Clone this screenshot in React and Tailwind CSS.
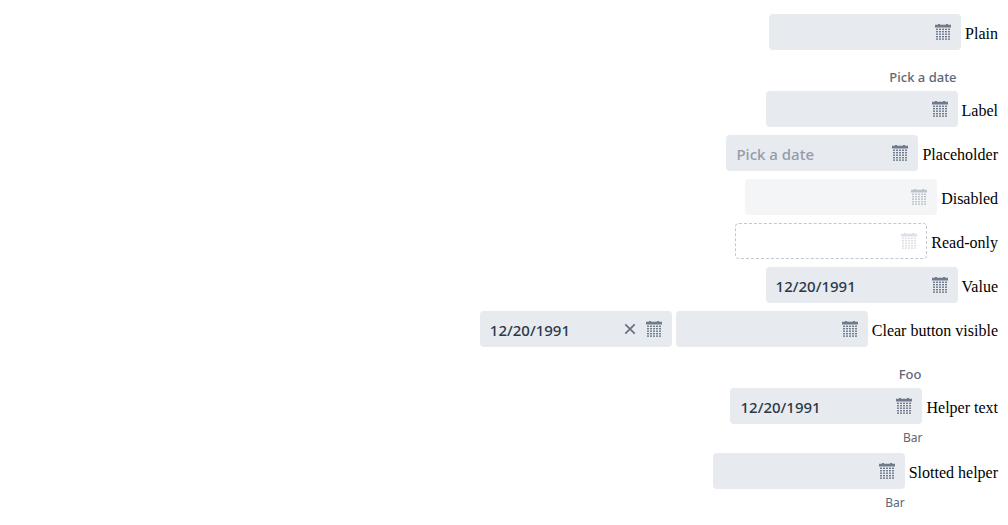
const tones = {
  normal: { box: "bg-[#e7eaee]", icon: "text-[#6f7b8b]" },
  disabled: { box: "bg-[#f3f5f7]", icon: "text-[#bdc3cc]" },
  readonly: { box: "outline-1 -outline-offset-1 outline-dashed outline-[#c3c8d0]", icon: "text-[#dde1e7]" },
};

function CalendarIcon() {
  return (
    <svg viewBox="0 0 16 18" className="h-[18px] w-4" fill="currentColor" aria-hidden="true">
      <path d="M0 1.8h3V1h2v.8h6V1h2v.8h3v2.7H0z" />
      {[5.6, 8, 10.5, 13, 15.4].map((y) =>
        [1, 4, 7, 10, 13].map((x) => (
          <rect key={`${x}-${y}`} x={x} y={y} width="2" height="1.4" />
        ))
      )}
    </svg>
  );
}

function ClearIcon() {
  return (
    <svg viewBox="0 0 12 12" className="size-3" fill="none" stroke="currentColor" strokeWidth="1.7" aria-hidden="true">
      <path d="M1.3 1.3l9.4 9.4M10.7 1.3l-9.4 9.4" />
    </svg>
  );
}

function DatePicker({ id, name, label, helper, value = "", placeholder, clear, state = "normal" }) {
  const tone = tones[state];
  const disabled = state === "disabled";
  return (
    <>
      {label && (
        <label htmlFor={id} className="row-start-1 h-[33px] pt-2 pr-px text-right text-[13px] leading-[22px] font-medium text-[#5d6776]">
          {label}
        </label>
      )}
      <div className={`row-start-2 flex h-9 w-48 items-center rounded-sm px-2.5 ${tone.box}`}>
        <input
          id={id}
          aria-label={label ? undefined : name}
          type="text"
          defaultValue={value}
          placeholder={placeholder}
          disabled={disabled}
          readOnly={state === "readonly"}
          className="h-full min-w-0 flex-1 bg-transparent pt-px text-[15px] font-medium text-[#2b3848] outline-none placeholder:text-[#939ba8]"
        />
        {clear && (
          <button type="button" aria-label="Clear" className="mr-2.5 text-[#667180]">
            <ClearIcon />
          </button>
        )}
        <button type="button" aria-label="Open calendar" disabled={disabled} className={tone.icon}>
          <CalendarIcon />
        </button>
      </div>
      {helper && (
        <div className="row-start-3 h-[21px] pt-1 text-right text-xs leading-5 text-[#5d6776]">{helper}</div>
      )}
    </>
  );
}

const rows = [
  { title: "Plain", fields: [{}] },
  { title: "Label", fields: [{ label: "Pick a date" }] },
  { title: "Placeholder", fields: [{ placeholder: "Pick a date" }] },
  { title: "Disabled", fields: [{ state: "disabled" }] },
  { title: "Read-only", fields: [{ state: "readonly" }] },
  { title: "Value", fields: [{ value: "12/20/1991" }] },
  { title: "Clear button visible", fields: [{ value: "12/20/1991", clear: true }, {}] },
  { title: "Helper text", fields: [{ label: "Foo", value: "12/20/1991", helper: "Bar" }] },
  { title: "Slotted helper", fields: [{ helper: "Bar" }] },
];

export default function App() {
  return (
    <main className="flex flex-col items-end gap-2 bg-white px-2.5 pt-3.5 font-['Noto_Sans',sans-serif]">
      {rows.map(({ title, fields }) => (
        <section key={title} className="grid grid-flow-col gap-x-1">
          {fields.map((field, i) => (
            <DatePicker key={i} id={`${title.toLowerCase().replaceAll(" ", "-")}-${i}`} name={title} {...field} />
          ))}
          <span className="row-start-2 self-center pt-1 font-['Liberation_Serif',serif] text-base leading-5 text-black">
            {title}
          </span>
        </section>
      ))}
    </main>
  );
}
